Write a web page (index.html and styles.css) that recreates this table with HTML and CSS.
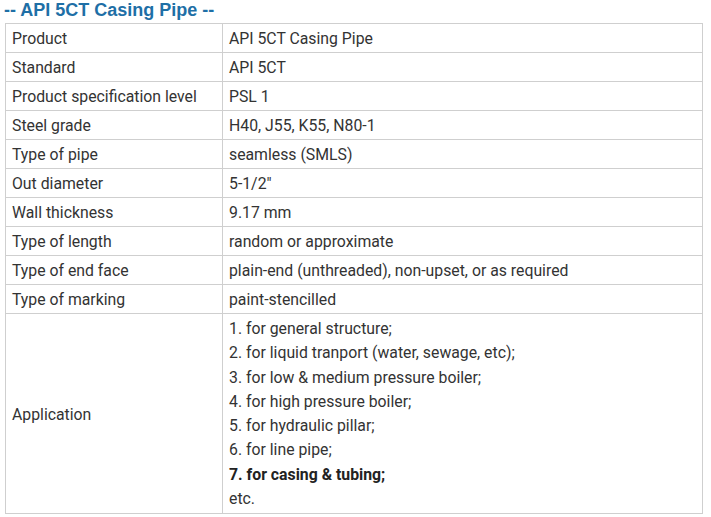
FILE: index.html
```html
<!DOCTYPE html>
<html>
<head>
<meta charset="utf-8">
<link rel="stylesheet" href="styles.css">
</head>
<body>
<h2 class="title">-- API 5CT Casing Pipe --</h2>
<table class="spec">
<tr><td class="k">Product</td><td>API 5CT Casing Pipe</td></tr>
<tr><td class="k">Standard</td><td>API 5CT</td></tr>
<tr><td class="k">Product specification level</td><td>PSL 1</td></tr>
<tr><td class="k">Steel grade</td><td>H40, J55, K55, N80-1</td></tr>
<tr><td class="k">Type of pipe</td><td>seamless (SMLS)</td></tr>
<tr><td class="k">Out diameter</td><td>5-1/2"</td></tr>
<tr><td class="k">Wall thickness</td><td>9.17 mm</td></tr>
<tr><td class="k">Type of length</td><td>random or approximate</td></tr>
<tr><td class="k">Type of end face</td><td>plain-end (unthreaded), non-upset, or as required</td></tr>
<tr><td class="k">Type of marking</td><td>paint-stencilled</td></tr>
<tr><td class="k">Application</td><td class="app">1. for general structure;<br>2. for liquid tranport (water, sewage, etc);<br>3. for low &amp; medium pressure boiler;<br>4. for high pressure boiler;<br>5. for hydraulic pillar;<br>6. for line pipe;<br><strong>7. for casing &amp; tubing;</strong><br>etc.</td></tr>
</table>
</body>
</html>
```
FILE: styles.css
```css
html, body {
  margin: 0;
  padding: 0;
  background: #fff;
}
.title {
  margin: 0;
  padding: 0 0 1px 4px;
  height: 21px;
  font-family: "Liberation Sans", Arial, sans-serif;
  font-size: 18px;
  font-weight: bold;
  line-height: 20px;
  color: #1e6fa6;
}
.spec {
  margin: 1px 0 0 5px;
  width: 698px;
  border-collapse: collapse;
  font-family: Roboto, "Noto Sans", sans-serif;
  font-size: 15.8px;
  color: #333;
}
.spec td {
  border: 1px solid #cfcfcf;
  padding: 3px 6px 1px 6px;
  line-height: 24px;
  height: 24px;
  vertical-align: middle;
}
.spec td.k {
  width: 204px;
}
.spec td.app {
  padding-top: 3px;
  padding-bottom: 2px;
  line-height: 24.3px;
}
.spec strong {
  font-weight: bold;
  color: #222;
}
```
